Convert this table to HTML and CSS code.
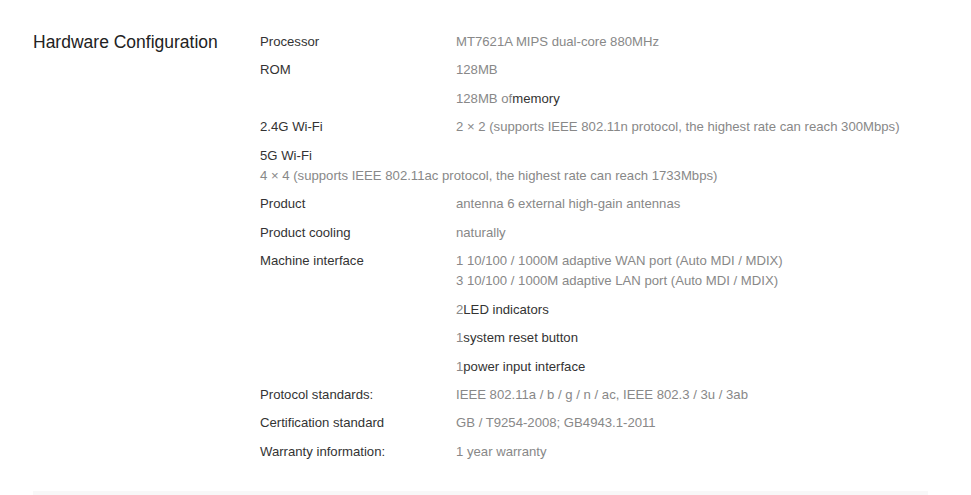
FILE: index.html
```html
<!DOCTYPE html>
<html>
<head>
<meta charset="utf-8">
<link rel="stylesheet" href="styles.css">
</head>
<body>
<div class="page">
  <section class="spec">
    <h2 class="spec-title">Hardware Configuration</h2>
    <div class="spec-list">
      <div class="row"><div class="label">Processor</div><div class="value">MT7621A MIPS dual-core 880MHz</div></div>
      <div class="row"><div class="label">ROM</div><div class="value">128MB</div></div>
      <div class="row"><div class="label"></div><div class="value">128MB of<span class="dark">memory</span></div></div>
      <div class="row"><div class="label">2.4G Wi-Fi</div><div class="value">2 × 2 (supports IEEE 802.11n protocol, the highest rate can reach 300Mbps)</div></div>
      <div class="row stacked"><div class="label">5G Wi-Fi</div><div class="value">4 × 4 (supports IEEE 802.11ac protocol, the highest rate can reach 1733Mbps)</div></div>
      <div class="row"><div class="label">Product</div><div class="value">antenna 6 external high-gain antennas</div></div>
      <div class="row"><div class="label">Product cooling</div><div class="value">naturally</div></div>
      <div class="row"><div class="label">Machine interface</div><div class="value">1 10/100 / 1000M adaptive WAN port (Auto MDI / MDIX)<br>3 10/100 / 1000M adaptive LAN port (Auto MDI / MDIX)</div></div>
      <div class="row"><div class="label"></div><div class="value">2<span class="dark">LED indicators</span></div></div>
      <div class="row"><div class="label"></div><div class="value">1<span class="dark">system reset button</span></div></div>
      <div class="row"><div class="label"></div><div class="value">1<span class="dark">power input interface</span></div></div>
      <div class="row"><div class="label">Protocol standards:</div><div class="value">IEEE 802.11a / b / g / n / ac, IEEE 802.3 / 3u / 3ab</div></div>
      <div class="row"><div class="label">Certification standard</div><div class="value">GB / T9254-2008; GB4943.1-2011</div></div>
      <div class="row"><div class="label">Warranty information:</div><div class="value">1 year warranty</div></div>
    </div>
  </section>
  <div class="divider"></div>
</div>
</body>
</html>
```

FILE: styles.css
```css
html, body {
  margin: 0;
  padding: 0;
  background: #fff;
}
body {
  font-family: "Liberation Sans", Arial, sans-serif;
  color: #333;
}
.page {
  padding: 32px 43px 0 33px;
}
.spec {
  display: flex;
  align-items: flex-start;
}
.spec-title {
  width: 227px;
  flex: none;
  margin: 0;
  font-size: 17.5px;
  font-weight: normal;
  line-height: 20px;
  color: #222;
}
.spec-list {
  flex: 1;
  display: flex;
  flex-direction: column;
  gap: 8.46px;
  font-size: 13.15px;
  line-height: 20px;
}
.row {
  display: flex;
}
.row.stacked {
  flex-direction: column;
}
.label {
  width: 196px;
  flex: none;
  color: #333;
}
.value {
  color: #888;
}
.dark {
  color: #333;
}
.divider {
  margin-top: 29px;
  height: 6px;
  background: #f8f8f8;
}
```
